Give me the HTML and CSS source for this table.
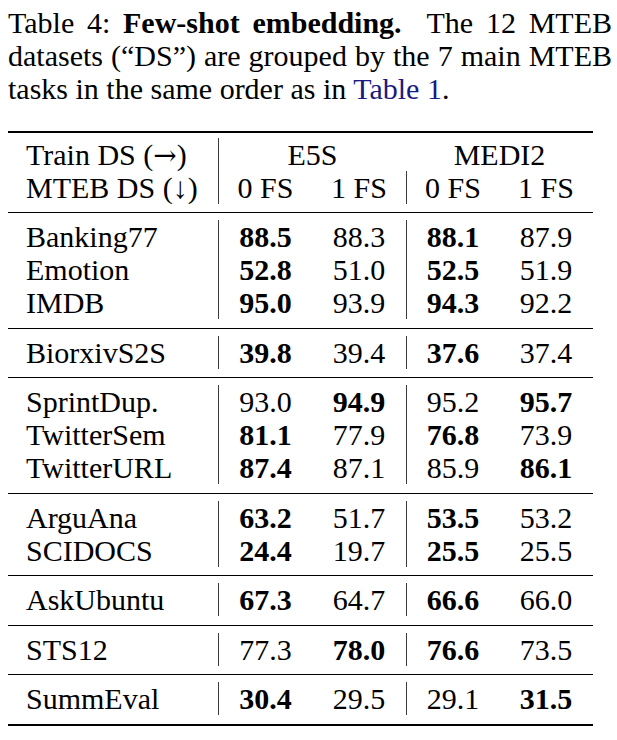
FILE: index.html
```html
<!DOCTYPE html>
<html>
<head>
<meta charset="utf-8">
<link rel="stylesheet" href="styles.css">
</head>
<body>
<div class="page">
  <p class="caption">Table 4: <b>Few-shot embedding.</b>&nbsp; The 12 MTEB datasets (“DS”) are grouped by the 7 main MTEB tasks in the same order as in <span class="ref">Table 1</span>.</p>
  <div class="table">
    <div class="group head">
      <div class="row">
        <div class="c name">Train DS (<span class="arrow">→</span>)</div>
        <div class="c bar span2">E5S</div>
        <div class="c span2">MEDI2</div>
      </div>
      <div class="row">
        <div class="c name">MTEB DS (↓)</div>
        <div class="c bar">0 FS</div>
        <div class="c">1 FS</div>
        <div class="c bar">0 FS</div>
        <div class="c">1 FS</div>
      </div>
    </div>
    <div class="group">
      <div class="row"><div class="c name">Banking77</div><div class="c bar b">88.5</div><div class="c">88.3</div><div class="c bar b">88.1</div><div class="c">87.9</div></div>
      <div class="row"><div class="c name">Emotion</div><div class="c bar b">52.8</div><div class="c">51.0</div><div class="c bar b">52.5</div><div class="c">51.9</div></div>
      <div class="row"><div class="c name">IMDB</div><div class="c bar b">95.0</div><div class="c">93.9</div><div class="c bar b">94.3</div><div class="c">92.2</div></div>
    </div>
    <div class="group">
      <div class="row"><div class="c name">BiorxivS2S</div><div class="c bar b">39.8</div><div class="c">39.4</div><div class="c bar b">37.6</div><div class="c">37.4</div></div>
    </div>
    <div class="group">
      <div class="row"><div class="c name">SprintDup.</div><div class="c bar">93.0</div><div class="c b">94.9</div><div class="c bar">95.2</div><div class="c b">95.7</div></div>
      <div class="row"><div class="c name">TwitterSem</div><div class="c bar b">81.1</div><div class="c">77.9</div><div class="c bar b">76.8</div><div class="c">73.9</div></div>
      <div class="row"><div class="c name">TwitterURL</div><div class="c bar b">87.4</div><div class="c">87.1</div><div class="c bar">85.9</div><div class="c b">86.1</div></div>
    </div>
    <div class="group">
      <div class="row"><div class="c name">ArguAna</div><div class="c bar b">63.2</div><div class="c">51.7</div><div class="c bar b">53.5</div><div class="c">53.2</div></div>
      <div class="row"><div class="c name">SCIDOCS</div><div class="c bar b">24.4</div><div class="c">19.7</div><div class="c bar b">25.5</div><div class="c">25.5</div></div>
    </div>
    <div class="group">
      <div class="row"><div class="c name">AskUbuntu</div><div class="c bar b">67.3</div><div class="c">64.7</div><div class="c bar b">66.6</div><div class="c">66.0</div></div>
    </div>
    <div class="group">
      <div class="row"><div class="c name">STS12</div><div class="c bar">77.3</div><div class="c b">78.0</div><div class="c bar b">76.6</div><div class="c">73.5</div></div>
    </div>
    <div class="group last">
      <div class="row"><div class="c name">SummEval</div><div class="c bar b">30.4</div><div class="c">29.5</div><div class="c bar">29.1</div><div class="c b">31.5</div></div>
    </div>
  </div>
</div>
</body>
</html>
```
FILE: styles.css
```css
html, body {
  margin: 0;
  padding: 0;
  background: #ffffff;
}
body {
  font-family: "Liberation Serif", "Times New Roman", serif;
  font-size: 30px;
  line-height: 33px;
  color: #000000;
}
.page {
  padding: 6px 0 0 8px;
  width: 604px;
}
.caption {
  margin: 0;
  text-align: justify;
  width: 604px;
}
.caption b {
  font-weight: bold;
}
.ref {
  color: #1a1a80;
}
.arrow {
  font-family: "DejaVu Serif", serif;
  font-size: 28px;
}
.table {
  margin-top: 26px;
  width: 585px;
  border-top: 2px solid #000;
  border-bottom: 2px solid #000;
}
.group {
  padding: 7px 0 8.5px 0;
  border-top: 1.5px solid #000;
}
.group.head {
  border-top: none;
  padding: 5px 0 8px 0;
}
.row {
  display: grid;
  grid-template-columns: 210px 94px 94px 93px 94px;
  height: 33px;
}
.c {
  text-align: center;
  white-space: nowrap;
}
.c.name {
  text-align: left;
  padding-left: 18px;
}
.c.bar {
  border-left: 1px solid #3a3a3a;
}
.c.span2 {
  grid-column: span 2;
}
.c.b {
  font-weight: bold;
}
```
